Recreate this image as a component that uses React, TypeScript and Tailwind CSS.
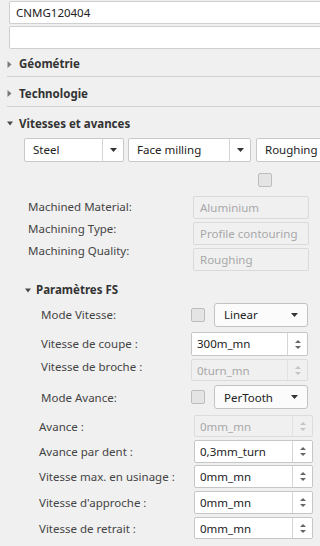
import React from 'react';

const font = { fontFamily: '"Noto Sans", "Open Sans", sans-serif' };

const Caret = ({ open }: { open: boolean }) =>
  open ? (
    <svg width="6" height="5" viewBox="0 0 6 5">
      <path d="M0 0.5H6L3 4.5Z" fill="#4a4a4a" />
    </svg>
  ) : (
    <svg width="5" height="7" viewBox="0 0 5 7">
      <path d="M0.5 0L4.5 3.5L0.5 7Z" fill="#7a7a7a" />
    </svg>
  );

const DownArrow = ({ color = '#333' }: { color?: string }) => (
  <svg width="7" height="4" viewBox="0 0 7 4">
    <path d="M0 0H7L3.5 4Z" fill={color} />
  </svg>
);

const SpinArrows = ({ disabled }: { disabled?: boolean }) => {
  const c = disabled ? '#c4c4c4' : '#666';
  return (
    <div className="flex flex-col items-center justify-center gap-[3px]">
      <svg width="6" height="3" viewBox="0 0 6 3">
        <path d="M0 3H6L3 0Z" fill={c} />
      </svg>
      <svg width="6" height="3" viewBox="0 0 6 3">
        <path d="M0 0H6L3 3Z" fill={c} />
      </svg>
    </div>
  );
};

const Section = ({ title, open, className }: { title: string; open: boolean; className: string }) => (
  <div className={className}>
    <div className="flex items-center h-full">
      <div className="w-[19px] pl-[7px] flex items-center">
        <Caret open={open} />
      </div>
      <span className="text-[11.5px] font-bold text-[#333]">{title}</span>
    </div>
  </div>
);

const Combo = ({ value, className }: { value: string; className: string }) => (
  <div className={`flex shrink-0 h-[24px] bg-white border border-[#c9c9c9] rounded-[2px] ${className}`}>
    <div className="flex-1 flex items-center pl-[8px] text-[11.5px] text-[#222]">{value}</div>
    <div className="w-[21px] border-l border-[#d4d4d4] flex items-center justify-center">
      <DownArrow />
    </div>
  </div>
);

const Check = () => (
  <div className="shrink-0 w-[14px] h-[14px] bg-[#e4e4e4] border border-[#bdbdbd] rounded-[2px]" />
);

const Select = ({ value }: { value: string }) => (
  <div className="flex items-center w-[94px] h-[24px] bg-[#fbfbfb] border border-[#c2c2c2] rounded-[3px] pl-[9px] pr-[9px] text-[11.5px] text-[#222]">
    <span className="flex-1">{value}</span>
    <DownArrow />
  </div>
);

const SpinBox = ({ value, disabled, className }: { value: string; disabled?: boolean; className: string }) => (
  <div
    className={`flex border rounded-[2px] ${
      disabled ? 'bg-[#f0f0f0] border-[#dcdcdc] text-[#a8a8a8]' : 'bg-white border-[#c6c6c6] text-[#222]'
    } ${className}`}
  >
    <div className="flex-1 flex items-center pl-[5px] text-[11.5px]">{value}</div>
    <div className={`w-[20px] border-l flex items-center justify-center ${disabled ? 'border-[#e2e2e2]' : 'border-[#d6d6d6]'}`}>
      <SpinArrows disabled={disabled} />
    </div>
  </div>
);

const ReadOnly = ({ value }: { value: string }) => (
  <div className="h-[23px] w-[116px] flex items-center pl-[6px] bg-[#f0f0f0] border border-[#dadada] rounded-[2px] text-[11.5px] text-[#a8a8a8]">
    {value}
  </div>
);

const Row = ({
  label,
  className,
  labelClass,
  children,
}: {
  label: string;
  className: string;
  labelClass: string;
  children: React.ReactNode;
}) => (
  <div className={`flex items-center ${className}`}>
    <div className={`text-[11.5px] text-[#444] ${labelClass}`}>{label}</div>
    {children}
  </div>
);

export default function App() {
  return (
    <div className="w-[320px] h-[546px] bg-[#f0f0f0] overflow-hidden" style={font}>
      <div className="pt-[1px] pl-[9px]">
        <div className="w-[330px] h-[23px] bg-white border border-[#cfcfcf] rounded-[2px] flex items-center pl-[6px] text-[11.5px] text-[#222]">
          CNMG120404
        </div>
        <div className="mt-[2px] w-[330px] h-[23px] bg-white border border-[#cfcfcf] rounded-[2px]" />
      </div>

      <Section title="Géométrie" open={false} className="h-[27px] pt-[3px]" />
      <div className="ml-[7px] border-t border-[#d2d2d2]" />
      <Section title="Technologie" open={false} className="h-[29px] pt-[4px]" />
      <div className="ml-[7px] border-t border-[#d2d2d2]" />
      <Section title="Vitesses et avances" open={true} className="h-[29px] pt-[4px]" />

      <div className="mt-[2px] flex pl-[24px] w-[400px]">
        <Combo value="Steel" className="w-[100px]" />
        <Combo value="Face milling" className="ml-[4px] w-[123px]" />
        <Combo value="Roughing" className="ml-[5px] w-[100px]" />
      </div>

      <div className="mt-[11px] pl-[258px]">
        <Check />
      </div>

      <div className="mt-[9px] flex">
        <div className="w-[193px] pl-[28px] flex flex-col text-[11.5px] text-[#444]">
          <div className="h-[22px] flex items-center">Machined Material:</div>
          <div className="h-[22px] flex items-center">Machining Type:</div>
          <div className="h-[22px] flex items-center">Machining Quality:</div>
        </div>
        <div className="flex flex-col gap-[3px]">
          <ReadOnly value="Aluminium" />
          <ReadOnly value="Profile contouring" />
          <ReadOnly value="Roughing" />
        </div>
      </div>

      <div className="h-[32px] pt-[6px] flex items-center pl-[25px]">
        <div className="w-[11px] flex items-center">
          <Caret open={true} />
        </div>
        <span className="text-[11.5px] font-bold text-[#333]">Paramètres FS</span>
      </div>

      <div className="pl-[41px]">
        <Row label="Mode Vitesse:" className="h-[24px]" labelClass="w-[150px]">
          <Check />
          <div className="ml-[9px]">
            <Select value="Linear" />
          </div>
        </Row>
        <Row label="Vitesse de coupe :" className="mt-[5px]" labelClass="w-[150px]">
          <SpinBox value="300m_mn" className="w-[117px] h-[24px]" />
        </Row>
        <Row label="Vitesse de broche :" className="mt-[2px]" labelClass="w-[150px] mb-[7px]">
          <SpinBox value="0turn_mn" disabled className="w-[117px] h-[22px]" />
        </Row>
        <Row label="Mode Avance:" className="mt-[3px] h-[24px]" labelClass="w-[150px]">
          <Check />
          <div className="ml-[9px]">
            <Select value="PerTooth" />
          </div>
        </Row>
      </div>

      <div className="pl-[39px]">
        <Row label="Avance :" className="mt-[6px]" labelClass="w-[155px]">
          <SpinBox value="0mm_mn" disabled className="w-[119px] h-[22px]" />
        </Row>
        <Row label="Avance par dent :" className="mt-[3px]" labelClass="w-[155px]">
          <SpinBox value="0,3mm_turn" className="w-[119px] h-[23px]" />
        </Row>
        <Row label="Vitesse max. en usinage :" className="mt-[2px]" labelClass="w-[155px]">
          <SpinBox value="0mm_mn" className="w-[119px] h-[23px]" />
        </Row>
        <Row label="Vitesse d'approche :" className="mt-[3px]" labelClass="w-[155px]">
          <SpinBox value="0mm_mn" className="w-[119px] h-[23px]" />
        </Row>
        <Row label="Vitesse de retrait :" className="mt-[3px]" labelClass="w-[155px]">
          <SpinBox value="0mm_mn" className="w-[119px] h-[22px]" />
        </Row>
      </div>
    </div>
  );
}
